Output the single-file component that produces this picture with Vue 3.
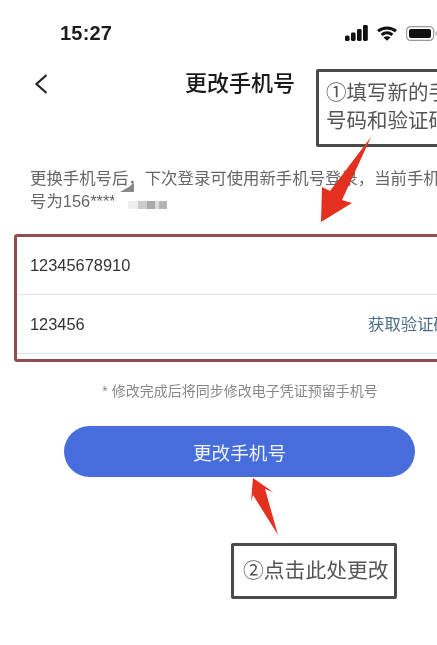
<script setup>
const rows = [
  { value: '12345678910', action: '' },
  { value: '123456', action: '获取验证码' }
]
</script>

<template>
  <div class="page">
    <div class="sheet">
      <header class="status">
        <span class="time">15:27</span>
        <div class="status-icons">
          <svg class="signal" width="23" height="16" viewBox="0 0 23 16" fill="#111">
            <rect x="0" y="10.500" width="4.600" height="5.500" rx="1.600" />
            <rect x="6" y="7.500" width="4.600" height="8.500" rx="1.400" />
            <rect x="12" y="4" width="4.600" height="12" rx="1.400" />
            <rect x="18" y="0" width="4.800" height="16" rx="1.400" />
          </svg>
          <svg class="wifi" width="20" height="15" viewBox="0 0 20 15" fill="none" stroke="#111" stroke-width="3">
            <path d="M1 5.200C6 .8 14 .8 19 5.200" />
            <path d="M4.600 8.800c3.200-2.600 7.600-2.600 10.800 0" />
            <path d="M10 14.800 6.500 11.400c2-1.500 5-1.500 7 0z" fill="#111" stroke="none" />
          </svg>
          <svg class="battery" width="31" height="15" viewBox="0 0 31 15">
            <rect x=".6" y=".6" width="27" height="13.800" rx="4" fill="none" stroke="#999" stroke-width="1.200" />
            <rect x="3" y="3" width="22" height="9" rx="2" fill="#111" />
            <path d="M29.500 5v5c1-.3 1.500-1.300 1.500-2.500S30.500 5.300 29.500 5z" fill="#aaa" />
          </svg>
        </div>
      </header>

      <nav class="nav">
        <svg class="back" width="14" height="20" viewBox="0 0 14 20" fill="none" stroke="#222" stroke-width="2.200">
          <path d="M12.500 1 2.500 10l10 9" />
        </svg>
        <h1 class="title">更改手机号</h1>
      </nav>

      <p class="desc">更换手机号后，下次登录可使用新手机号登录，当前手机<br />号为156****</p>

      <section class="form">
        <div v-for="row in rows" :key="row.value" class="row">
          <span class="value">{{ row.value }}</span>
          <span v-if="row.action" class="action">{{ row.action }}</span>
        </div>
      </section>

      <p class="hint">* 修改完成后将同步修改电子凭证预留手机号</p>

      <button class="submit" type="button">更改手机号</button>
    </div>

    <div class="smudge smudge-white"></div>
    <div class="smudge smudge-gray"></div>
    <div class="smudge smudge-wedge"></div>

    <div class="callout callout-one">①填写新的手机<br />号码和验证码</div>
    <div class="callout callout-two">②点击此处更改</div>

    <svg class="arrows" width="437" height="645" viewBox="0 0 437 645">
      <polygon points="371,137 342,200 352,203 321,222 322,187 330,191" fill="#e3301f" />
      <polygon points="253,478 273,492 265,489 278,535 253,495 251,502" fill="#e3301f" />
    </svg>
  </div>
</template>

<style scoped>
.page {
  position: relative;
  width: 437px;
  height: 645px;
  overflow: hidden;
  background: #fff;
  font-family: "Liberation Sans", "Noto Sans CJK SC", sans-serif;
  filter: blur(0.35px);
}
.sheet {
  width: 480px;
}
.status {
  height: 66px;
  display: flex;
  align-items: center;
  justify-content: space-between;
  box-sizing: border-box;
  width: 437px;
  padding-left: 60px;
}
.time {
  font-size: 20px;
  font-weight: 700;
  color: #1c1c1c;
  letter-spacing: 0.2px;
}
.status-icons {
  display: flex;
  align-items: center;
  gap: 9px;
}
.nav {
  position: relative;
  box-sizing: border-box;
  width: 480px;
  height: 34px;
  padding-bottom: 4px;
  display: flex;
  align-items: center;
  justify-content: center;
}
.back {
  position: absolute;
  left: 34px;
  top: 8px;
}
.title {
  margin: 0;
  font-size: 22px;
  font-weight: 500;
  color: #1a1a1a;
}
.desc {
  margin: 67px 0 0 30px;
  font-size: 16.4px;
  line-height: 23px;
  color: #666;
  white-space: nowrap;
}
.form {
  box-sizing: border-box;
  margin: 21px 0 0 14px;
  width: 460px;
  height: 128px;
  border: 3px solid #914d4f;
  border-radius: 3px;
}
.row {
  box-sizing: border-box;
  height: 58px;
  display: flex;
  align-items: center;
  justify-content: space-between;
  padding: 0 21px 2px 13px;
  border-bottom: 1px solid #e2e2e2;
}
.row:last-child {
  height: 59px;
  padding-bottom: 0;
}
.value {
  font-size: 16.4px;
  line-height: 20px;
  color: #333;
}
.action {
  font-size: 16.4px;
  line-height: 20px;
  color: #4d6d8a;
}
.hint {
  margin: 19px 0 0;
  width: 480px;
  text-align: center;
  font-size: 14px;
  line-height: 20px;
  color: #888;
}
.submit {
  display: block;
  margin: 25px 0 0 64px;
  width: 351px;
  height: 51px;
  border: 0;
  border-radius: 26px;
  background: #476cdb;
  color: #eef3fb;
  font-family: inherit;
  font-size: 18.6px;
}
.callout {
  position: absolute;
  box-sizing: border-box;
  background: #fff;
  border: 3px solid #4a4a4a;
  border-radius: 2px;
  color: #555;
  white-space: nowrap;
}
.callout-one {
  left: 316px;
  top: 69px;
  width: 160px;
  height: 78px;
  padding: 7px 0 0 7px;
  font-size: 20.5px;
  line-height: 28px;
}
.callout-two {
  left: 231px;
  top: 543px;
  width: 166px;
  height: 56px;
  padding-left: 9px;
  font-size: 20.8px;
  line-height: 50px;
}
.arrows {
  position: absolute;
  left: 0;
  top: 0;
  pointer-events: none;
}
.smudge {
  position: absolute;
}
.smudge-white {
  left: 114px;
  top: 192px;
  width: 60px;
  height: 20px;
  background: #fff;
}
.smudge-gray {
  left: 128px;
  top: 201px;
  width: 39px;
  height: 8px;
  background: linear-gradient(90deg, #eee 0 25%, #ccc 25% 50%, #aaa 50% 70%, #ddd 70% 80%, #b5b5b5 80%);
}
.smudge-wedge {
  left: 120px;
  top: 184px;
  width: 14px;
  height: 8px;
  background: #888;
  clip-path: polygon(100% 0, 100% 100%, 0 100%);
}
</style>

<style>
body {
  margin: 0;
  background: #fff;
}
</style>
